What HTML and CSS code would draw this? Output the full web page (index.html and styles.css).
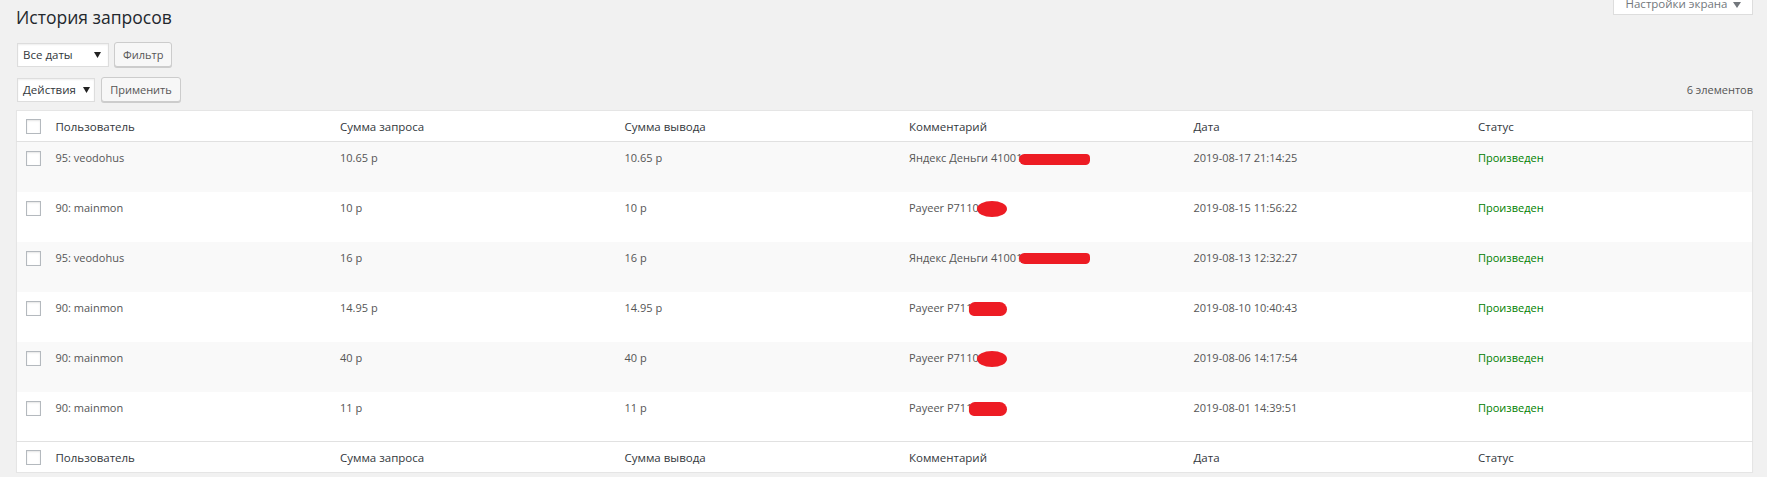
FILE: index.html
```html
<!DOCTYPE html>
<html lang="ru">
<head>
    <meta charset="UTF-8">
    <title>История запросов</title>
    <link rel="stylesheet" href="styles.css">
</head>
<body>
    <div class="top">
        <h1>История запросов</h1>
        <div class="screen-options">Настройки экрана <svg width="8" height="6" viewBox="0 0 8 6"><path d="M0 0h8L4 6z" fill="#72777c"/></svg></div>
    </div>

    <div class="nav-row">
        <div class="fake-select sel-dates">Все даты <svg width="7" height="6" viewBox="0 0 7 6"><path d="M0 0h7L3.5 6z" fill="#222"/></svg></div>
        <button class="btn btn-filter">Фильтр</button>
    </div>

    <div class="nav-row nav-actions">
        <div class="fake-select sel-actions">Действия <svg width="7" height="6" viewBox="0 0 7 6"><path d="M0 0h7L3.5 6z" fill="#222"/></svg></div>
        <button class="btn btn-apply">Применить</button>
        <span class="count">6 элементов</span>
    </div>

    <table class="list">
        <colgroup>
            <col class="col-check">
            <col><col><col><col><col><col>
        </colgroup>
        <thead>
            <tr>
                <td class="check"><span class="cb"></span></td>
                <th>Пользователь</th>
                <th>Сумма запроса</th>
                <th>Сумма вывода</th>
                <th>Комментарий</th>
                <th>Дата</th>
                <th>Статус</th>
            </tr>
        </thead>
        <tbody>
            <tr class="alt">
                <td class="check"><span class="cb"></span></td>
                <td>95: veodohus</td>
                <td>10.65 р</td>
                <td>10.65 р</td>
                <td>Яндекс Деньги 41001<span class="blot blot-long"></span></td>
                <td>2019-08-17 21:14:25</td>
                <td class="done">Произведен</td>
            </tr>
            <tr>
                <td class="check"><span class="cb"></span></td>
                <td>90: mainmon</td>
                <td>10 р</td>
                <td>10 р</td>
                <td>Payeer P7110<span class="blot blot-round"></span></td>
                <td>2019-08-15 11:56:22</td>
                <td class="done">Произведен</td>
            </tr>
            <tr class="alt">
                <td class="check"><span class="cb"></span></td>
                <td>95: veodohus</td>
                <td>16 р</td>
                <td>16 р</td>
                <td>Яндекс Деньги 41001<span class="blot blot-long"></span></td>
                <td>2019-08-13 12:32:27</td>
                <td class="done">Произведен</td>
            </tr>
            <tr>
                <td class="check"><span class="cb"></span></td>
                <td>90: mainmon</td>
                <td>14.95 р</td>
                <td>14.95 р</td>
                <td>Payeer P711<span class="blot blot-short"></span></td>
                <td>2019-08-10 10:40:43</td>
                <td class="done">Произведен</td>
            </tr>
            <tr class="alt">
                <td class="check"><span class="cb"></span></td>
                <td>90: mainmon</td>
                <td>40 р</td>
                <td>40 р</td>
                <td>Payeer P7110<span class="blot blot-round"></span></td>
                <td>2019-08-06 14:17:54</td>
                <td class="done">Произведен</td>
            </tr>
            <tr>
                <td class="check"><span class="cb"></span></td>
                <td>90: mainmon</td>
                <td>11 р</td>
                <td>11 р</td>
                <td>Payeer P711<span class="blot blot-short"></span></td>
                <td>2019-08-01 14:39:51</td>
                <td class="done">Произведен</td>
            </tr>
        </tbody>
        <tfoot>
            <tr>
                <td class="check"><span class="cb"></span></td>
                <th>Пользователь</th>
                <th>Сумма запроса</th>
                <th>Сумма вывода</th>
                <th>Комментарий</th>
                <th>Дата</th>
                <th>Статус</th>
            </tr>
        </tfoot>
    </table>
</body>
</html>
```

FILE: styles.css
```css
body {
    margin: 0;
    padding: 0 14px 0 16px;
    background: #f1f1f1;
    font-family: "Open Sans", Arial, sans-serif;
    font-size: 11px;
    color: #444;
}
.top {
    display: flex;
    justify-content: space-between;
    align-items: flex-start;
    height: 42px;
}
h1 {
    margin: 4px 0 0 0;
    font-size: 17.5px;
    font-weight: 400;
    line-height: 26px;
    color: #23282d;
}
.screen-options {
    margin-top: -9px;
    width: 140px;
    height: 24px;
    box-sizing: border-box;
    padding-top: 5px;
    text-align: center;
    background: #fff;
    border: 1px solid #ddd;
    border-top: none;
    color: #72777c;
    font-size: 11.5px;
    line-height: 16px;
}
.screen-options svg {
    margin-left: 2px;
}
.nav-row {
    display: flex;
    align-items: center;
    height: 25px;
}
.nav-actions {
    margin-top: 10px;
}
.fake-select {
    height: 24px;
    box-sizing: border-box;
    display: flex;
    align-items: center;
    justify-content: space-between;
    padding: 0 7px 0 5px;
    margin-left: 1px;
    background: #fff;
    border: 1px solid #ddd;
    box-shadow: inset 0 1px 2px rgba(0,0,0,.07);
    color: #32373c;
    font-size: 11.5px;
}
.sel-dates {
    width: 92px;
}
.sel-actions {
    width: 78px;
    padding-right: 4px;
}
.btn {
    height: 25px;
    margin-left: 5px;
    padding: 0 8px;
    background: #f7f7f7;
    border: 1px solid #ccc;
    border-radius: 3px;
    box-shadow: 0 1px 0 #ccc;
    color: #555;
    font-family: inherit;
    font-size: 11px;
}
.btn-filter {
    width: 58px;
}
.btn-apply {
    width: 80px;
    margin-left: 6px;
}
.count {
    margin-left: auto;
    color: #555;
    font-size: 11px;
}
.list {
    margin-top: 8px;
    width: 100%;
    table-layout: fixed;
    border-collapse: collapse;
    background: #fff;
    border: 1px solid #e5e5e5;
    box-shadow: 0 1px 1px rgba(0,0,0,.04);
}
.col-check {
    width: 29px;
}
.list th,
.list td {
    text-align: left;
    vertical-align: top;
    padding: 0 10px;
    font-weight: 400;
    white-space: nowrap;
}
.list thead tr {
    height: 31px;
    border-bottom: 1px solid #e1e1e1;
}
.list tfoot tr {
    height: 31px;
    border-top: 1px solid #e1e1e1;
}
.list thead th,
.list tfoot th {
    vertical-align: middle;
    color: #32373c;
    font-size: 11.5px;
}
.list tbody tr {
    height: 50px;
}
.list tbody td {
    padding-top: 8px;
    color: #555;
    line-height: 16px;
}
.list tr.alt {
    background: #f9f9f9;
}
.list td.check {
    padding: 0 0 0 9px;
    vertical-align: middle;
}
.list tbody td.check {
    vertical-align: top;
    padding-top: 9px;
}
.cb {
    display: block;
    width: 15px;
    height: 15px;
    box-sizing: border-box;
    border: 1px solid #b4b9be;
    background: #fff;
    box-shadow: inset 0 1px 2px rgba(0,0,0,.1);
}
.list td.done {
    color: #008000;
}
.blot {
    display: inline-block;
    background: #ed1c24;
    vertical-align: middle;
}
.blot-long {
    width: 71px;
    height: 11px;
    margin-left: -3px;
    border-radius: 8px 6px 7px 9px;
}
.blot-round {
    width: 30px;
    height: 16px;
    margin-left: -2px;
    border-radius: 50%;
}
.blot-short {
    width: 38px;
    height: 14px;
    margin-left: -3px;
    border-radius: 7px 9px 8px 6px;
}
```
